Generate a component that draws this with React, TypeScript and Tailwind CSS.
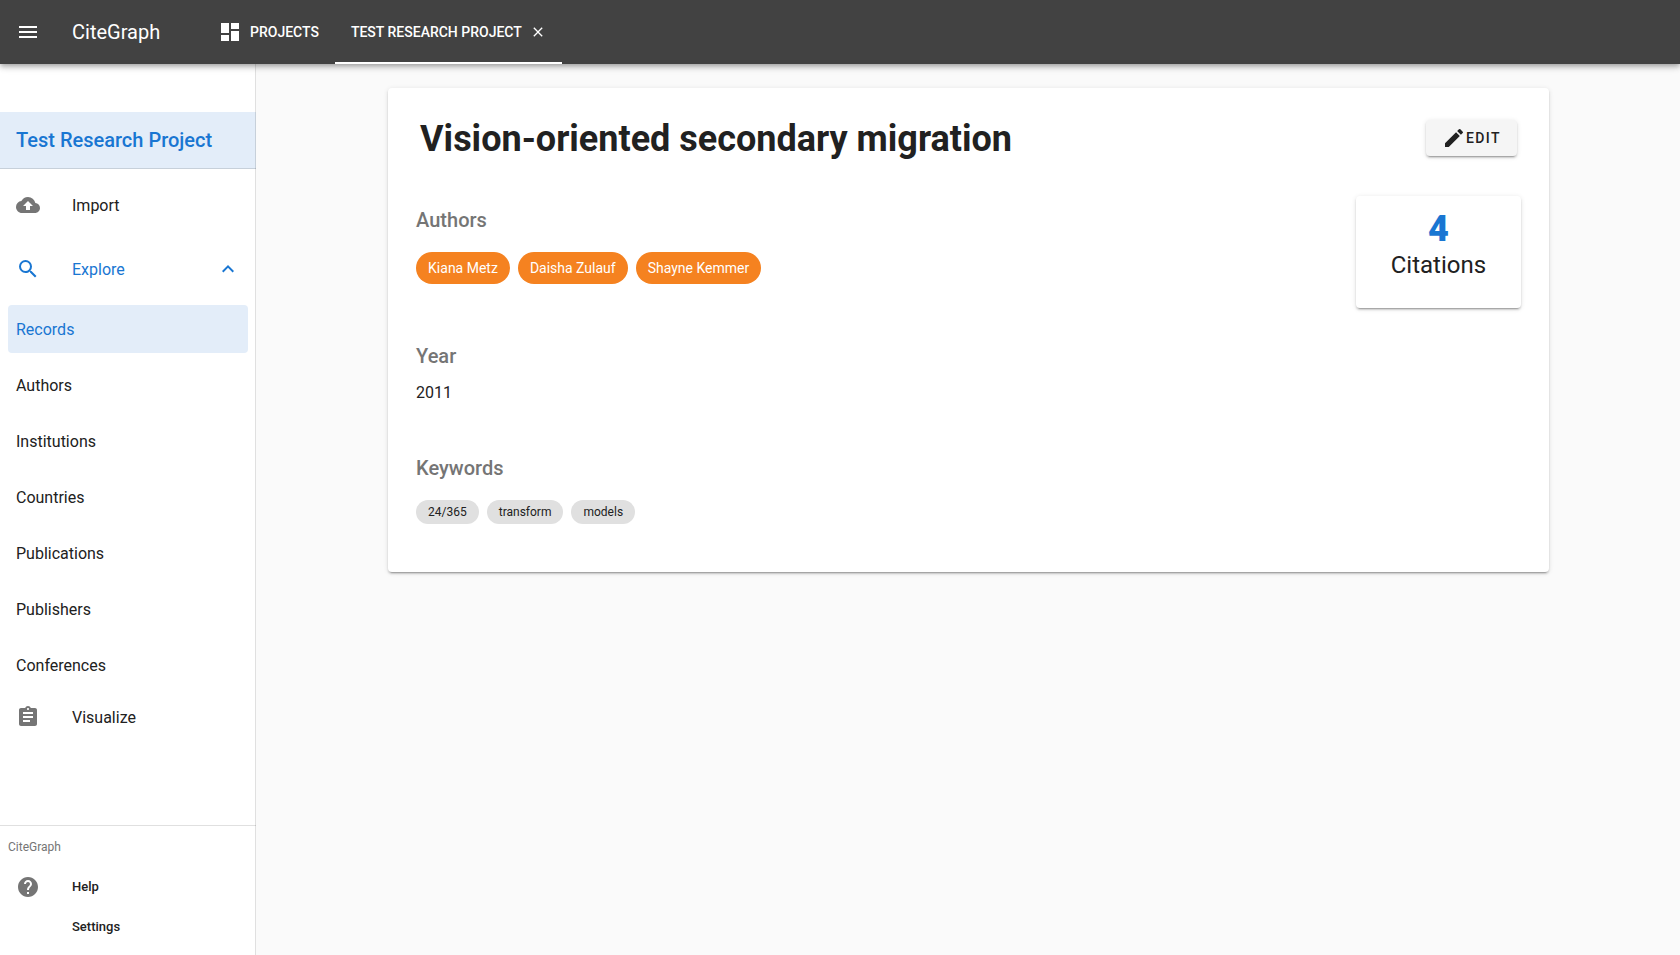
import React from "react";
import {
  MdAssignment,
  MdClose,
  MdCloudUpload,
  MdDashboard,
  MdEdit,
  MdHelp,
  MdKeyboardArrowUp,
  MdMenu,
  MdSearch,
} from "react-icons/md";

const EXPLORE_LINKS = [
  "Records",
  "Authors",
  "Institutions",
  "Countries",
  "Publications",
  "Publishers",
  "Conferences",
];

const AUTHORS = ["Kiana Metz", "Daisha Zulauf", "Shayne Kemmer"];
const KEYWORDS = ["24/365", "transform", "models"];

const RAISED =
  "shadow-[0_3px_1px_-2px_rgba(0,0,0,0.2),0_2px_2px_0_rgba(0,0,0,0.14),0_1px_5px_0_rgba(0,0,0,0.12)]";

function TopBar() {
  return (
    <header className="relative z-10 flex h-16 shrink-0 items-center bg-[#424242] pl-4 text-white shadow-[0_2px_4px_-1px_rgba(0,0,0,0.2),0_4px_5px_0_rgba(0,0,0,0.14),0_1px_10px_0_rgba(0,0,0,0.12)]">
      <button type="button" aria-label="Toggle navigation" className="mr-8">
        <MdMenu className="size-6" />
      </button>
      <div className="w-[130px] text-xl">CiteGraph</div>
      <nav className="flex h-full text-sm font-medium uppercase">
        <a href="#projects" className="flex items-center gap-2 px-4">
          <MdDashboard className="size-6" />
          Projects
        </a>
        <div className="flex items-center gap-2 border-y-2 border-t-transparent border-b-white px-4">
          <a href="#project" aria-current="page" className="uppercase">
            Test Research Project
          </a>
          <button type="button" aria-label="Close project">
            <MdClose className="size-4" />
          </button>
        </div>
      </nav>
    </header>
  );
}

function Sidebar() {
  return (
    <aside className="relative flex w-64 shrink-0 flex-col bg-white pt-12 after:absolute after:inset-y-0 after:right-0 after:w-px after:bg-black/12">
      <h2 className="flex h-[57px] shrink-0 items-center border-b border-black/12 bg-[#e3edf9] px-4 text-xl font-medium text-[#1976d2]">
        Test Research Project
      </h2>
      <nav className="flex flex-col pt-2">
        <a href="#import" className="flex h-14 items-center gap-8 px-4">
          <MdCloudUpload className="size-6 text-[#757575]" />
          <span className="pt-0.5">Import</span>
        </a>
        <button
          type="button"
          aria-expanded="true"
          className="mt-2 flex h-14 items-center gap-8 px-4 text-[#1976d2]"
        >
          <MdSearch className="size-6" />
          <span className="grow pt-0.5 text-left">Explore</span>
          <MdKeyboardArrowUp className="size-6" />
        </button>
        <ul className="flex flex-col gap-2 px-2 pt-2">
          {EXPLORE_LINKS.map((label) => (
            <li key={label}>
              <a
                href={"#" + label.toLowerCase()}
                className={
                  label === "Records"
                    ? "flex h-12 items-center rounded bg-[#e3edf9] px-2 pt-0.5 text-[#1976d2]"
                    : "flex h-12 items-center rounded px-2 pt-0.5"
                }
              >
                {label}
              </a>
            </li>
          ))}
        </ul>
        <a href="#visualize" className="flex h-14 items-center gap-8 px-4">
          <MdAssignment className="size-6 text-[#757575]" />
          <span className="pt-0.5">Visualize</span>
        </a>
      </nav>
      <div className="mt-auto flex flex-col border-t border-[#e0e0e0] pb-2 text-[13px] font-medium">
        <div className="flex h-[41px] items-center px-2 text-xs font-normal text-[#757575]">
          CiteGraph
        </div>
        <a href="#help" className="flex h-10 items-center gap-8 px-4">
          <MdHelp className="size-6 text-[#757575]" />
          Help
        </a>
        <a href="#settings" className="flex h-10 items-center pr-4 pl-18">
          Settings
        </a>
      </div>
    </aside>
  );
}

function SectionTitle({ children }: { children: React.ReactNode }) {
  return <h2 className="text-xl leading-8 font-medium text-[#757575]">{children}</h2>;
}

function RecordCard() {
  return (
    <article className={"mx-auto w-10/12 rounded bg-white px-7 pt-8 pb-12 " + RAISED}>
      <div className="flex h-9 items-center justify-between px-1">
        <h1 className="pt-0.5 text-4xl font-bold">Vision-oriented secondary migration</h1>
        <button
          type="button"
          className={
            "flex h-9 items-center rounded bg-[#f5f5f5] px-4 text-sm font-medium tracking-widest uppercase " +
            RAISED
          }
        >
          <MdEdit className="size-6" />
          Edit
        </button>
      </div>
      <div className="flex items-start justify-between pt-10">
        <div className="flex flex-col gap-12 pt-2">
          <section className="pb-2">
            <SectionTitle>Authors</SectionTitle>
            <ul className="flex gap-2 pt-4">
              {AUTHORS.map((name) => (
                <li
                  key={name}
                  className="flex h-8 items-center rounded-full bg-[#f58220] px-3 text-sm text-white"
                >
                  {name}
                </li>
              ))}
            </ul>
          </section>
          <section>
            <SectionTitle>Year</SectionTitle>
            <p className="h-8 pt-2 leading-[26px]">2011</p>
          </section>
          <section>
            <SectionTitle>Keywords</SectionTitle>
            <ul className="flex gap-2 pt-4">
              {KEYWORDS.map((word) => (
                <li
                  key={word}
                  className="flex h-6 items-center rounded-full bg-[#e0e0e0] px-3 text-xs"
                >
                  {word}
                </li>
              ))}
            </ul>
          </section>
        </div>
        <div
          className={"flex h-28 w-[165px] flex-col items-center rounded bg-white pt-[17px] " + RAISED}
        >
          <span className="text-4xl leading-8 font-black text-[#1976d2]">4</span>
          <span className="pt-1 text-2xl">Citations</span>
        </div>
      </div>
    </article>
  );
}

export default function App() {
  return (
    <div className="flex min-h-screen flex-col bg-[#fafafa] font-['Roboto',sans-serif] text-base text-[#212121]">
      <TopBar />
      <div className="flex grow">
        <Sidebar />
        <main className="grow py-6 pr-[15px] pl-4">
          <RecordCard />
        </main>
      </div>
    </div>
  );
}
